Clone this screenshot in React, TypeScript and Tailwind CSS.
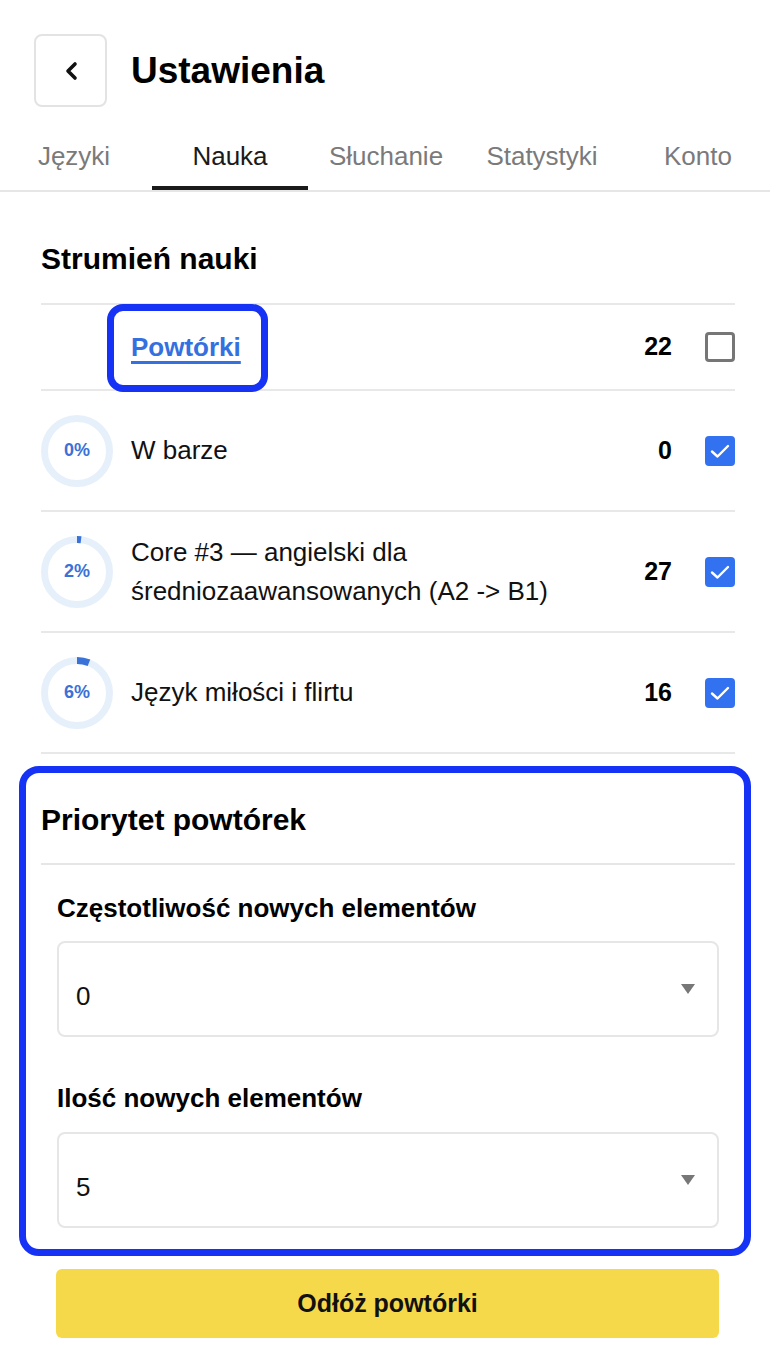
import React from 'react';

const tabs = ['Języki', 'Nauka', 'Słuchanie', 'Statystyki', 'Konto'];

const courses = [
  { pct: 0, title: 'W barze', count: 0 },
  { pct: 2, title: 'Core #3 — angielski dla średniozaawansowanych (A2 -> B1)', count: 27 },
  { pct: 6, title: 'Język miłości i flirtu', count: 16 },
];

function ProgressRing({ pct }: { pct: number }) {
  const r = 32.5;
  const c = 2 * Math.PI * r;
  return (
    <div className="relative h-[72px] w-[72px] shrink-0">
      <svg width="72" height="72" viewBox="0 0 72 72" className="-rotate-90">
        <circle cx="36" cy="36" r={r} fill="none" stroke="#e6f0fb" strokeWidth="7" />
        {pct > 0 && (
          <circle
            cx="36"
            cy="36"
            r={r}
            fill="none"
            stroke="#3a72d8"
            strokeWidth="7"
            strokeDasharray={`${(c * pct) / 100} ${c}`}
          />
        )}
      </svg>
      <span className="absolute inset-0 flex items-center justify-center text-[18px] font-bold text-[#3a72d8]">
        {pct}%
      </span>
    </div>
  );
}

function Checkbox({ checked }: { checked: boolean }) {
  if (!checked) {
    return <div className="h-[30px] w-[30px] shrink-0 rounded-[4px] border-[3px] border-[#767676]" />;
  }
  return (
    <div className="flex h-[30px] w-[30px] shrink-0 items-center justify-center rounded-[4px] bg-[#3272f0]">
      <svg width="20" height="16" viewBox="0 0 20 16">
        <polyline points="2,8.5 7.5,13.5 18,3" fill="none" stroke="#fff" strokeWidth="2.4" strokeLinecap="round" strokeLinejoin="round" />
      </svg>
    </div>
  );
}

function Select({ value }: { value: string }) {
  return (
    <div className="flex h-[96px] items-center justify-between rounded-[8px] border-2 border-[#e6e6e6] pl-[17px] pr-[22px]">
      <span className="pt-[14px] text-[26px] leading-[30px] text-[#111]">{value}</span>
      <svg width="14" height="10" viewBox="0 0 14 10">
        <polygon points="0,0 14,0 7,10" fill="#777" />
      </svg>
    </div>
  );
}

export default function App() {
  return (
    <div className="min-h-[1366px] w-[770px] overflow-hidden bg-white font-['Liberation_Sans',Arial,sans-serif] text-[#111]">
      {/* header */}
      <div className="flex items-center gap-[24px] pl-[34px] pt-[34px]">
        <button className="flex h-[73px] w-[73px] items-center justify-center rounded-[8px] border-2 border-[#e3e3e3]">
          <svg width="16" height="20" viewBox="0 0 16 20">
            <polyline points="12,3 5,10 12,17" fill="none" stroke="#111" strokeWidth="3.6" strokeLinecap="round" strokeLinejoin="round" />
          </svg>
        </button>
        <h1 className="text-[37px] font-bold leading-[44px] text-black">Ustawienia</h1>
      </div>

      {/* tabs */}
      <div className="mt-[20px] border-b-2 border-[#e6e6e6]">
        <div className="-ml-[4px] flex">
          {tabs.map((t) => (
            <div
              key={t}
              className={`relative w-[156px] shrink-0 pb-[19px] pt-[14px] text-center text-[26px] leading-[30px] ${
                t === 'Nauka' ? 'text-[#1a1a1a]' : 'text-[#7a7a7a]'
              }`}
            >
              {t}
              {t === 'Nauka' && <span className="absolute bottom-0 left-0 right-0 h-[4px] bg-[#1a1a1a]" />}
            </div>
          ))}
        </div>
      </div>

      {/* learning stream */}
      <div className="pl-[41px] pr-[35px]">
        <h2 className="pb-[26px] pt-[49px] text-[30px] font-bold leading-[36px] text-black">Strumień nauki</h2>
        <div className="border-t-2 border-[#e8e8e8]">
          <div className="flex h-[86px] items-center border-b-2 border-[#e8e8e8]">
            <div className="w-[90px] shrink-0" />
            <div className="flex-1">
              <span className="relative inline-block">
                <span className="text-[26px] font-bold leading-[30px] text-[#3470e0] underline decoration-[3px] underline-offset-[5px]">
                  Powtórki
                </span>
                <span className="absolute -bottom-[29px] -left-[24px] -right-[27px] -top-[28px] rounded-[16px] border-[7px] border-[#1632f4]" />
              </span>
            </div>
            <span className="text-[25px] font-bold text-black">22</span>
            <div className="ml-[33px]">
              <Checkbox checked={false} />
            </div>
          </div>
          {courses.map((c) => (
            <div key={c.title} className="flex h-[121px] items-center border-b-2 border-[#e8e8e8]">
              <ProgressRing pct={c.pct} />
              <div className="ml-[18px] flex-1 pr-[40px] text-[26px] leading-[39px] text-[#111]">{c.title}</div>
              <span className="text-[25px] font-bold text-black">{c.count}</span>
              <div className="ml-[33px]">
                <Checkbox checked />
              </div>
            </div>
          ))}
        </div>
      </div>

      {/* review priority */}
      <div className="mx-[19px] mt-[12px] rounded-[20px] border-[7px] border-[#1632f4] pb-[21px] pl-[15px] pr-[7px]">
        <div className="mr-[2px] flex h-[92px] items-center border-b-2 border-[#e6e6e6]">
          <h2 className="pt-[4px] text-[30px] font-bold leading-[36px] text-black">Priorytet powtórek</h2>
        </div>
        <div className="pl-[16px] pr-[18px]">
          <div className="pb-[18px] pt-[28px] text-[26px] font-bold leading-[30px] text-black">Częstotliwość nowych elementów</div>
          <Select value="0" />
          <div className="pb-[19px] pt-[46px] text-[26px] font-bold leading-[30px] text-black">Ilość nowych elementów</div>
          <Select value="5" />
        </div>
      </div>

      <div className="pl-[56px] pr-[51px] pt-[13px]">
        <button className="flex h-[69px] w-full items-center justify-center rounded-[6px] bg-[#f6d94b] text-[25px] font-bold text-[#111]">
          Odłóż powtórki
        </button>
      </div>
    </div>
  );
}
